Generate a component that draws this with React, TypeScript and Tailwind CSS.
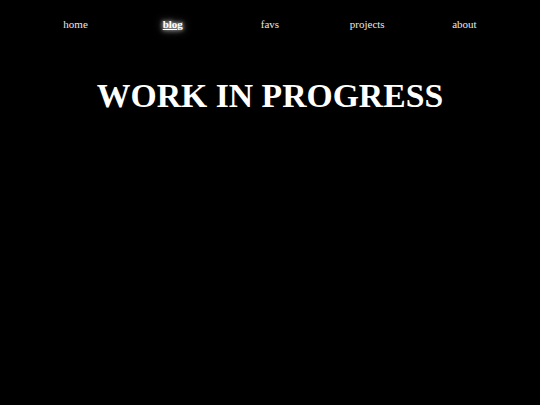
import React from 'react';

const links = ['home', 'blog', 'favs', 'projects', 'about'];
const current = 'blog';

export default function App() {
  return (
    <div className="min-h-[405px] bg-black text-[#e8e8e8] font-['Liberation_Serif','Times_New_Roman',serif]">
      {/* top navigation */}
      <nav className="mx-auto grid w-[90%] grid-cols-5 pt-[16px] text-[11px] leading-[16px]">
        {links.map((l) => (
          <a
            key={l}
            href="#"
            className={
              l === current
                ? 'text-center font-bold text-white underline [text-shadow:0_0_4px_#fff,0_0_8px_#bbb]'
                : 'text-center'
            }
          >
            {l}
          </a>
        ))}
      </nav>

      <h1 className="mt-[44px] text-center text-[33.7px] font-bold leading-[40px] text-white">
        WORK IN PROGRESS
      </h1>
    </div>
  );
}
